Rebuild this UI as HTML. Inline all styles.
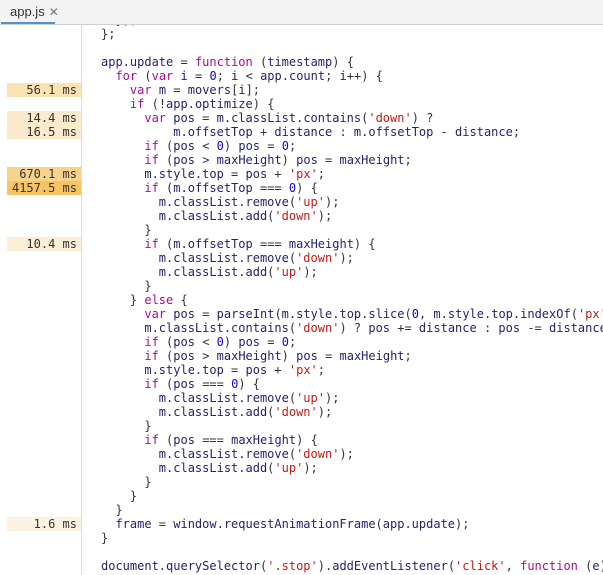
<!DOCTYPE html>
<html><head><meta charset="utf-8"><style>
html,body{margin:0;padding:0;width:603px;height:575px;overflow:hidden;background:#fff;}
.tabbar{position:absolute;left:0;top:0;width:603px;height:24px;background:#f3f3f3;border-bottom:1px solid #cfcfcf;}
.tab{position:absolute;left:10px;top:4px;font:13px "Liberation Sans",sans-serif;color:#333;}
.tab .x{color:#777;font-size:12px;margin-left:4px;}
.ul{position:absolute;left:1px;top:22px;width:54px;height:2px;background:#4a95cf;}
.gutter{position:absolute;left:0;top:25px;width:81px;height:550px;border-right:1px solid #ddd;background:#fff;}
.code{position:absolute;left:0;top:0;width:603px;height:575px;overflow:hidden;}
.ln{position:absolute;left:101px;height:14px;line-height:14px;white-space:pre;font:12px "DejaVu Sans Mono","Liberation Mono",monospace;color:#24246a;}
.t{position:absolute;left:7px;width:74px;height:14px;line-height:14px;text-align:right;font:12px "DejaVu Sans Mono","Liberation Mono",monospace;color:#333;box-sizing:border-box;padding-right:4px;}
.k{color:#aa0d91}.s{color:#c41a16}.n{color:#1c00cf}.p{color:#333}
</style></head><body>
<div class="code">
<div class="gutter"></div>
<div class="t" style="top:83px;background:#fae2b2">56.1 ms</div>
<div class="t" style="top:111px;background:#fbeacb">14.4 ms</div>
<div class="t" style="top:125px;background:#fbeacb">16.5 ms</div>
<div class="t" style="top:167px;background:#f8d38c">670.1 ms</div>
<div class="t" style="top:181px;background:#f6c462">4157.5 ms</div>
<div class="t" style="top:237px;background:#fcefd8">10.4 ms</div>
<div class="t" style="top:517px;background:#fdf3e3">1.6 ms</div>
<div class="ln" style="top:13px"><span class="p">  });</span></div>
<div class="ln" style="top:27px"><span class="p">};</span></div>
<div class="ln" style="top:55px">app.update <span class="p">=</span> <span class="k">function</span> <span class="p">(</span>timestamp<span class="p">) {</span></div>
<div class="ln" style="top:69px">  <span class="k">for</span> <span class="p">(</span><span class="k">var</span> i <span class="p">=</span> <span class="n">0</span><span class="p">;</span> i <span class="p">&lt;</span> app.count<span class="p">;</span> i<span class="p">++) {</span></div>
<div class="ln" style="top:83px">    <span class="k">var</span> m <span class="p">=</span> movers<span class="p">[</span>i<span class="p">];</span></div>
<div class="ln" style="top:97px">    <span class="k">if</span> <span class="p">(!</span>app.optimize<span class="p">) {</span></div>
<div class="ln" style="top:111px">      <span class="k">var</span> pos <span class="p">=</span> m.classList.contains<span class="p">(</span><span class="s">'down'</span><span class="p">) ?</span></div>
<div class="ln" style="top:125px">          m.offsetTop <span class="p">+</span> distance <span class="p">:</span> m.offsetTop <span class="p">-</span> distance<span class="p">;</span></div>
<div class="ln" style="top:139px">      <span class="k">if</span> <span class="p">(</span>pos <span class="p">&lt;</span> <span class="n">0</span><span class="p">)</span> pos <span class="p">=</span> <span class="n">0</span><span class="p">;</span></div>
<div class="ln" style="top:153px">      <span class="k">if</span> <span class="p">(</span>pos <span class="p">&gt;</span> maxHeight<span class="p">)</span> pos <span class="p">=</span> maxHeight<span class="p">;</span></div>
<div class="ln" style="top:167px">      m.style.top <span class="p">=</span> pos <span class="p">+</span> <span class="s">'px'</span><span class="p">;</span></div>
<div class="ln" style="top:181px">      <span class="k">if</span> <span class="p">(</span>m.offsetTop <span class="p">===</span> <span class="n">0</span><span class="p">) {</span></div>
<div class="ln" style="top:195px">        m.classList.remove<span class="p">(</span><span class="s">'up'</span><span class="p">);</span></div>
<div class="ln" style="top:209px">        m.classList.add<span class="p">(</span><span class="s">'down'</span><span class="p">);</span></div>
<div class="ln" style="top:223px"><span class="p">      }</span></div>
<div class="ln" style="top:237px">      <span class="k">if</span> <span class="p">(</span>m.offsetTop <span class="p">===</span> maxHeight<span class="p">) {</span></div>
<div class="ln" style="top:251px">        m.classList.remove<span class="p">(</span><span class="s">'down'</span><span class="p">);</span></div>
<div class="ln" style="top:265px">        m.classList.add<span class="p">(</span><span class="s">'up'</span><span class="p">);</span></div>
<div class="ln" style="top:279px"><span class="p">      }</span></div>
<div class="ln" style="top:293px"><span class="p">    } </span><span class="k">else</span><span class="p"> {</span></div>
<div class="ln" style="top:307px">      <span class="k">var</span> pos <span class="p">=</span> parseInt<span class="p">(</span>m.style.top.slice<span class="p">(</span><span class="n">0</span><span class="p">,</span> m.style.top.indexOf<span class="p">(</span><span class="s">'px'</span><span class="p">)));</span></div>
<div class="ln" style="top:321px">      m.classList.contains<span class="p">(</span><span class="s">'down'</span><span class="p">) ?</span> pos <span class="p">+=</span> distance <span class="p">:</span> pos <span class="p">-=</span> distance<span class="p">;</span></div>
<div class="ln" style="top:335px">      <span class="k">if</span> <span class="p">(</span>pos <span class="p">&lt;</span> <span class="n">0</span><span class="p">)</span> pos <span class="p">=</span> <span class="n">0</span><span class="p">;</span></div>
<div class="ln" style="top:349px">      <span class="k">if</span> <span class="p">(</span>pos <span class="p">&gt;</span> maxHeight<span class="p">)</span> pos <span class="p">=</span> maxHeight<span class="p">;</span></div>
<div class="ln" style="top:363px">      m.style.top <span class="p">=</span> pos <span class="p">+</span> <span class="s">'px'</span><span class="p">;</span></div>
<div class="ln" style="top:377px">      <span class="k">if</span> <span class="p">(</span>pos <span class="p">===</span> <span class="n">0</span><span class="p">) {</span></div>
<div class="ln" style="top:391px">        m.classList.remove<span class="p">(</span><span class="s">'up'</span><span class="p">);</span></div>
<div class="ln" style="top:405px">        m.classList.add<span class="p">(</span><span class="s">'down'</span><span class="p">);</span></div>
<div class="ln" style="top:419px"><span class="p">      }</span></div>
<div class="ln" style="top:433px">      <span class="k">if</span> <span class="p">(</span>pos <span class="p">===</span> maxHeight<span class="p">) {</span></div>
<div class="ln" style="top:447px">        m.classList.remove<span class="p">(</span><span class="s">'down'</span><span class="p">);</span></div>
<div class="ln" style="top:461px">        m.classList.add<span class="p">(</span><span class="s">'up'</span><span class="p">);</span></div>
<div class="ln" style="top:475px"><span class="p">      }</span></div>
<div class="ln" style="top:489px"><span class="p">    }</span></div>
<div class="ln" style="top:503px"><span class="p">  }</span></div>
<div class="ln" style="top:517px">  frame <span class="p">=</span> window.requestAnimationFrame<span class="p">(</span>app.update<span class="p">);</span></div>
<div class="ln" style="top:531px"><span class="p">}</span></div>
<div class="ln" style="top:559px">document.querySelector<span class="p">(</span><span class="s">'.stop'</span><span class="p">).</span>addEventListener<span class="p">(</span><span class="s">'click'</span><span class="p">,</span> <span class="k">function</span> <span class="p">(</span>e<span class="p">) {</span></div>
</div>
<div class="tabbar"><div class="tab">app.js<span class="x">✕</span></div><div class="ul"></div></div>
</body></html>
